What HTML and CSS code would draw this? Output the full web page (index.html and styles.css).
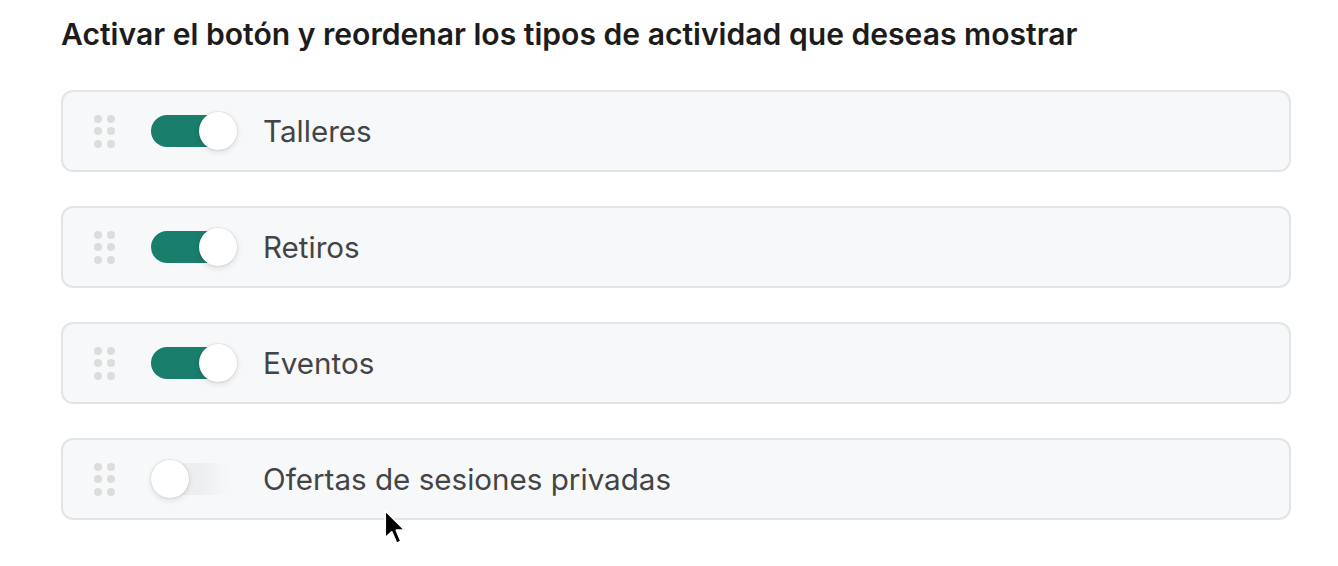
FILE: index.html
```html
<!DOCTYPE html>
<html lang="es">
<head>
<meta charset="utf-8">
<title>Tipos de actividad</title>
<link rel="stylesheet" href="styles.css">
</head>
<body>
<main class="page">
  <h1 class="title">Activar el botón y reordenar los tipos de actividad que deseas mostrar</h1>
  <ul class="list">
    <li class="card">
      <span class="handle"><i></i><i></i><i></i><i></i><i></i><i></i></span>
      <span class="switch on"><span class="knob"></span></span>
      <span class="label">Talleres</span>
    </li>
    <li class="card">
      <span class="handle"><i></i><i></i><i></i><i></i><i></i><i></i></span>
      <span class="switch on"><span class="knob"></span></span>
      <span class="label">Retiros</span>
    </li>
    <li class="card">
      <span class="handle"><i></i><i></i><i></i><i></i><i></i><i></i></span>
      <span class="switch on"><span class="knob"></span></span>
      <span class="label">Eventos</span>
    </li>
    <li class="card">
      <span class="handle"><i></i><i></i><i></i><i></i><i></i><i></i></span>
      <span class="switch"><span class="knob"></span></span>
      <span class="label">Ofertas de sesiones privadas</span>
    </li>
  </ul>
</main>
<svg class="cursor" width="24" height="38" viewBox="0 0 22 34" aria-hidden="true">
  <path d="M2 1 L2 26 L8 20.5 L12.5 31 L16.5 29.3 L12.2 19 L20 19 Z" fill="#000" stroke="#fff" stroke-width="1.6" stroke-linejoin="round"/>
</svg>
</body>
</html>
```
FILE: styles.css
```css
* { box-sizing: border-box; }
html, body { margin: 0; padding: 0; background: #ffffff; }
body {
  font-family: Inter, "Noto Sans", "Liberation Sans", sans-serif;
  color: #222;
  width: 1338px;
  height: 566px;
  overflow: hidden;
  position: relative;
}
.page {
  padding: 14px 0 0 61px;
  width: 1291px;
}
.title {
  margin: 0;
  font-size: 30.1px;
  line-height: 40px;
  font-weight: 600;
  color: #1c1c1c;
  letter-spacing: 0;
  white-space: nowrap;
}
.list {
  list-style: none;
  margin: 36px 0 0 0;
  padding: 0;
  display: flex;
  flex-direction: column;
  gap: 34px;
}
.card {
  height: 82px;
  border: 2px solid #e2e5e7;
  border-radius: 12px;
  background: #f6f8f9;
  display: flex;
  align-items: center;
  padding-left: 31px;
}
.handle {
  display: grid;
  grid-template-columns: 8px 8px;
  grid-auto-rows: 8px;
  column-gap: 5px;
  row-gap: 4.5px;
  width: 21px;
}
.handle i {
  display: block;
  width: 8px;
  height: 8px;
  border-radius: 50%;
  background: #dcdcdc;
}
.switch {
  position: relative;
  margin-left: 36px;
  width: 80px;
  height: 32px;
  border-radius: 16px;
  background: linear-gradient(90deg, #f1f2f3 0%, #eceeef 60%, rgba(240,242,243,0) 100%);
}
.switch.on { background: #1a7e6c; }
.knob {
  position: absolute;
  top: -3px;
  left: 0;
  width: 38px;
  height: 38px;
  border-radius: 50%;
  background: #ffffff;
  box-shadow: 0 2px 6px rgba(0,0,0,0.12), 0 0 0 1px rgba(0,0,0,0.05);
}
.switch.on .knob { left: 48px; }
.label {
  margin-left: 32px;
  font-size: 29.6px;
  font-weight: 400;
  color: #444;
  letter-spacing: 0;
}
.cursor {
  position: absolute;
  left: 383px;
  top: 509px;
}
```
